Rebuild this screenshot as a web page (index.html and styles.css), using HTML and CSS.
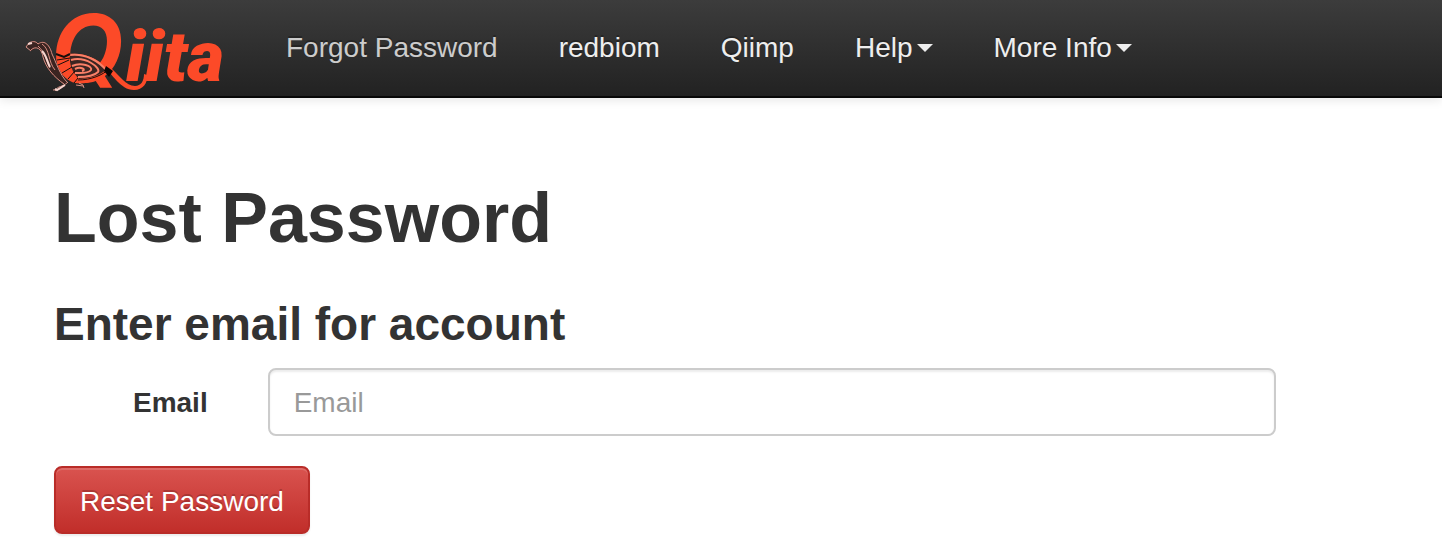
FILE: index.html
```html
<!DOCTYPE html>
<html lang="en">
<head>
  <meta charset="UTF-8">
  <meta name="viewport" content="width=device-width, initial-scale=1.0">
  <title>Qiita</title>
  <link rel="stylesheet" href="styles.css">
</head>
<body>
  <nav class="navbar">
    <a class="brand" href="#" aria-label="Qiita">
      <svg class="logo" width="204" height="92" viewBox="24 4 204 92">
        <g class="logo-text">
          <text class="logo-q" x="51" y="82">Q</text>
          <text class="logo-iita" x="126" y="81">iita</text>
        </g>
        <!-- tail of the Q -->
        <path d="M104 67C112 73 120 90 134 90C143 90 148 83 147 75L144 74C144 81 141 86 135 86C126 86 119 75 112 69Z" fill="#fc4a28"/>
        <!-- wing -->
        <path d="M69 54C86 52 101 60 109 71C101 80 86 85 75 83C61 79 55 64 57 54Z" fill="#fc4a28"/>
        <path d="M70 55C85 53 98 61 106 70C99 76 88 79 79 79C72 72 69 64 70 55Z" fill="#3b2522"/>
        <g fill="none" stroke="#fa8068" stroke-width="2">
          <path d="M70 55C85 53 99 61 107 71"/>
          <path d="M71 60C86 56 101 68 98 72C94 76 86 77 78 77"/>
          <path d="M72 66C81 62 93 66 91 70C88 74 80 73 75 73"/>
          <path d="M75 69C81 66 87 70 82 71"/>
        </g>
        <g fill="none" stroke="#160e0c">
          <path d="M56 54L64 57L70 54" stroke-width="2"/>
          <path d="M57 60L70 58M58 65L69 60M62 73L72 67M68 79L75 71M74 83L78 78"/>
          <path d="M78 80C91 80 103 75 109 69"/>
        </g>
        <path d="M106 66L113 71L109 77L104 71Z" fill="#090706"/>
        <!-- head, neck and legs -->
        <path d="M27 46C28 42 34 40 38 43C47 38 51 48 53 55C57 62 60 74 67 82L64 85C56 78 50 74 47 67C44 60 43 52 37 48L31 51Z" fill="#3a2421"/>
        <g fill="none" stroke="#d98f83" stroke-width="1">
          <path d="M31 51L26 47L29 43C32 41 36 41 38 44C45 39 50 46 52 54C56 62 60 75 67 82"/>
          <path d="M31 50C36 45 42 49 43 57C46 68 54 77 64 84"/>
          <path d="M42 44C50 49 48 62 55 70"/>
          <path d="M38 46C45 52 46 61 50 68"/>
          <path d="M68 82C62 88 58 85 55 91M64 85C59 91 58 89 53 90M79 83L83 85L84 88M76 85L83 86"/>
        </g>
        <path d="M42 51C47 56 47 62 50 67M28 44L32 43M65 85L57 90L55 89" fill="none" stroke="#f6d5cf" stroke-width="2"/>
      </svg>
    </a>
    <ul class="nav">
      <li><a class="muted" href="#">Forgot Password</a></li>
      <li><a href="#">redbiom</a></li>
      <li><a href="#">Qiimp</a></li>
      <li><a href="#">Help<span class="caret"></span></a></li>
      <li><a href="#">More Info<span class="caret"></span></a></li>
    </ul>
  </nav>

  <main class="content">
    <h1>Lost Password</h1>
    <h3>Enter email for account</h3>
    <form>
      <div class="form-group">
        <label for="email">Email</label>
        <div class="field">
          <input type="email" id="email" name="email" placeholder="Email">
        </div>
      </div>
      <button type="submit" class="btn-danger">Reset Password</button>
    </form>
  </main>
</body>
</html>
```
FILE: styles.css
```css
* {
  box-sizing: border-box;
}

body {
  margin: 0;
  font-family: "Liberation Sans", Arial, sans-serif;
  font-size: 28px;
  line-height: 40px;
  color: #333;
  background: #fff;
}

.navbar {
  display: flex;
  align-items: flex-start;
  min-height: 98px;
  padding-left: 24px;
  background: linear-gradient(#3c3c3c, #222);
  border-bottom: 2px solid #080808;
  box-shadow: 0 2px 10px rgba(0, 0, 0, 0.1);
}

.brand {
  padding: 4px 28px 0 0;
}

.logo {
  display: block;
  overflow: visible;
}

.logo-text {
  fill: #fc4a28;
}

.logo-q {
  font: italic bold 94px Inter, sans-serif;
}

.logo-iita {
  font: italic 900 71px Roboto, sans-serif;
}

.nav {
  display: flex;
  gap: 1px;
  margin: 0;
  padding: 0;
  list-style: none;
}

.nav a {
  display: flex;
  align-items: center;
  padding: 28px 30px;
  color: #eee;
  text-decoration: none;
  text-shadow: 0 -2px 0 rgba(0, 0, 0, 0.25);
}

.nav a:hover {
  color: #fff;
}

.nav .muted {
  color: #ccc;
}

.caret {
  margin-left: 4px;
  border-top: 8px solid;
  border-right: 8px solid transparent;
  border-left: 8px solid transparent;
}

.content {
  padding: 80px 166px 22px 54px;
}

h1,
h3 {
  margin: 0;
  font-weight: bold;
}

h1 {
  margin-bottom: 40px;
  font-size: 70px;
  line-height: 80px;
}

h3 {
  margin-bottom: 18px;
  font-size: 46px;
  line-height: 52px;
}

.form-group {
  display: grid;
  grid-template-columns: 2fr 10fr;
  align-items: center;
  margin: 0 -30px 30px;
}

label {
  padding: 2px 30px 0;
  font-weight: bold;
  text-align: right;
}

.field {
  padding: 0 30px;
}

input {
  display: block;
  width: 100%;
  height: 68px;
  padding: 14px 24px 12px;
  font: inherit;
  color: #555;
  background: #fff;
  border: 2px solid #ccc;
  border-radius: 8px;
  box-shadow: inset 0 2px 2px rgba(0, 0, 0, 0.08);
}

input::placeholder {
  color: #999;
  opacity: 1;
}

.btn-danger {
  display: block;
  height: 68px;
  padding: 14px 24px 12px;
  font: inherit;
  color: #fff;
  text-shadow: 0 -2px 0 rgba(0, 0, 0, 0.2);
  background: linear-gradient(#d9534f, #c12e2a);
  border: 2px solid #b92c28;
  border-radius: 8px;
  box-shadow: inset 0 2px 0 rgba(255, 255, 255, 0.15), 0 2px 2px rgba(0, 0, 0, 0.08);
  cursor: pointer;
}
```
